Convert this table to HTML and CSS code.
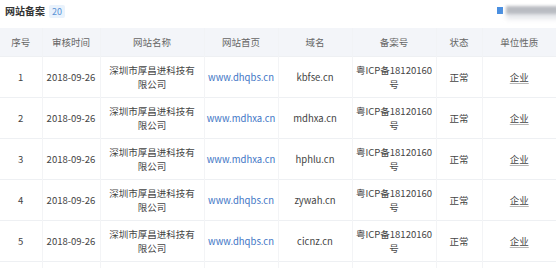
FILE: index.html
```html
<!DOCTYPE html>
<html lang="zh">
<head>
<meta charset="utf-8">
<link rel="stylesheet" href="styles.css">
</head>
<body>
<div class="panel">
  <div class="bar">
    <div class="title">网站备案<span class="badge">20</span></div>
    <div class="blurred"><span class="sq"></span><span class="blur-text"></span></div>
  </div>
  <table class="grid">
    <colgroup>
      <col class="c1"><col class="c2"><col class="c3"><col class="c4"><col class="c5"><col class="c6"><col class="c7"><col class="c8">
    </colgroup>
    <thead>
      <tr><th>序号</th><th>审核时间</th><th>网站名称</th><th>网站首页</th><th>域名</th><th>备案号</th><th>状态</th><th>单位性质</th></tr>
    </thead>
    <tbody>
      <tr><td>1</td><td>2018-09-26</td><td>深圳市厚昌进科技有限公司</td><td><a class="link">www.dhqbs.cn</a></td><td>kbfse.cn</td><td>粤ICP备18120160号</td><td>正常</td><td><span class="u">企业</span></td></tr>
      <tr><td>2</td><td>2018-09-26</td><td>深圳市厚昌进科技有限公司</td><td><a class="link">www.mdhxa.cn</a></td><td>mdhxa.cn</td><td>粤ICP备18120160号</td><td>正常</td><td><span class="u">企业</span></td></tr>
      <tr><td>3</td><td>2018-09-26</td><td>深圳市厚昌进科技有限公司</td><td><a class="link">www.mdhxa.cn</a></td><td>hphlu.cn</td><td>粤ICP备18120160号</td><td>正常</td><td><span class="u">企业</span></td></tr>
      <tr><td>4</td><td>2018-09-26</td><td>深圳市厚昌进科技有限公司</td><td><a class="link">www.dhqbs.cn</a></td><td>zywah.cn</td><td>粤ICP备18120160号</td><td>正常</td><td><span class="u">企业</span></td></tr>
      <tr><td>5</td><td>2018-09-26</td><td>深圳市厚昌进科技有限公司</td><td><a class="link">www.dhqbs.cn</a></td><td>cicnz.cn</td><td>粤ICP备18120160号</td><td>正常</td><td><span class="u">企业</span></td></tr>
      <tr><td>6</td><td>2018-09-26</td><td>深圳市厚昌进科技有限公司</td><td><a class="link">www.dhqbs.cn</a></td><td>qbnzs.cn</td><td>粤ICP备18120160号</td><td>正常</td><td><span class="u">企业</span></td></tr>
    </tbody>
  </table>
</div>
</body>
</html>
```

FILE: styles.css
```css
html, body {
  margin: 0;
  padding: 0;
  background: #ffffff;
}
body {
  font-family: "Noto Sans CJK SC", "Noto Sans", sans-serif;
  color: #444;
  overflow: hidden;
}
.panel {
  width: 556px;
}
.bar {
  height: 28px;
  display: flex;
  align-items: flex-start;
  justify-content: space-between;
}
.title {
  padding: 3px 0 0 5px;
  font-size: 10px;
  line-height: 16px;
  font-weight: 700;
  color: #333;
  display: flex;
  align-items: center;
}
.badge {
  margin-left: 4px;
  padding: 0 3px;
  height: 13px;
  line-height: 13px;
  font-size: 9px;
  font-weight: 400;
  color: #5a93d6;
  background: #e9f2fc;
  border-radius: 2px;
}
.blurred {
  display: flex;
  align-items: center;
  gap: 3px;
  padding-top: 6px;
  margin-right: -4px;
}
.sq {
  width: 6px;
  height: 7px;
  background: #4a8fe0;
  filter: blur(0.6px);
}
.blur-text {
  width: 54px;
  height: 8px;
  background: #b9bcc2;
  filter: blur(1.5px);
  box-shadow: 0 5px 4px #e4e6ea;
}
.grid {
  width: 556px;
  border-collapse: collapse;
  table-layout: fixed;
  font-size: 9.5px;
}
.c1 { width: 42px; }
.c2 { width: 58px; }
.c3 { width: 104px; }
.c4 { width: 74px; }
.c5 { width: 74px; }
.c6 { width: 84px; }
.c7 { width: 46px; }
.c8 { width: 74px; }
.grid th {
  height: 28px;
  padding: 0;
  background: #f3f5f9;
  color: #666;
  font-weight: 400;
  text-align: center;
  border-left: 1px solid #f1f3f6;
}
.grid td {
  height: 40px;
  padding: 0 8px;
  text-align: center;
  line-height: 14px;
  color: #444;
  border-top: 1px solid #eef0f3;
  border-left: 1px solid #f3f4f6;
}
.grid td:first-child, .grid th:first-child {
  border-left: none;
}
.grid td:nth-child(6) {
  padding: 0 3px;
}
.grid td:nth-child(2), .grid td:nth-child(4), .grid td:nth-child(5) {
  padding: 0 2px;
}
.link {
  color: #3f76c6;
  text-decoration: none;
}
.u {
  text-decoration: underline;
  text-decoration-color: #b5b5b5;
  text-underline-offset: 2px;
}
```
